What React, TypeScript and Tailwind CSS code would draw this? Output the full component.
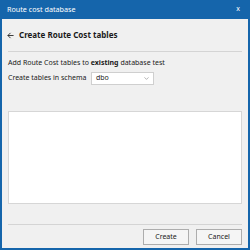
import { ChevronDown } from 'lucide-react';

export default function App() {
  return (
    <div className="w-[250px] h-[250px] bg-[#1565ab] px-[2px] pb-[2px] flex flex-col font-['Noto_Sans',sans-serif] text-[7px] text-[#1a1a1a] whitespace-nowrap">
      <div className="h-[19px] shrink-0 flex items-center justify-between pl-[5px] pr-[8px] text-white text-[7.2px]">
        <span>Route cost database</span>
        <span className="text-[7px]">x</span>
      </div>

      <div className="flex-1 bg-[#f0f0f0] flex flex-col">
        <div className="h-[32px] flex items-center px-[5px] gap-[5px]">
          <svg width="7" height="7" viewBox="0 0 8 8" fill="none" stroke="#222" strokeWidth="1">
            <path d="M7.5 4H1M4 1L1 4l3 3" />
          </svg>
          <span className="font-bold text-[8px]">Create Route Cost tables</span>
        </div>
        <div className="mx-[6px] h-px bg-[#d4d4d4]" />

        <div className="px-[6px] flex flex-col">
          <div className="mt-[5px] h-[12px] flex items-center">
            Add Route Cost tables to&nbsp;<b>existing</b>&nbsp;database test
          </div>
          <div className="mt-[3px] h-[13px] flex items-center">
            <span className="w-[83px]">Create tables in schema</span>
            <div className="w-[63px] h-[13px] bg-white border border-[#cfcfcf] flex items-center justify-between pl-[4px] pr-[3px]">
              <span>dbo</span>
              <ChevronDown size={7} strokeWidth={1.5} color="#555" />
            </div>
          </div>
          <div className="mt-[26px] h-[93px] bg-white border border-[#d6d6d6]" />
        </div>

        <div className="mt-[20px] mx-[6px] h-px bg-[#d4d4d4]" />

        <div className="mt-[4px] px-[6px] flex justify-end gap-[7px]">
          <button className="w-[46px] h-[16px] bg-[#f5f5f5] border border-[#adadad] text-[7px]">Create</button>
          <button className="w-[46px] h-[16px] bg-[#f5f5f5] border border-[#adadad] text-[7px]">Cancel</button>
        </div>
      </div>
    </div>
  );
}
